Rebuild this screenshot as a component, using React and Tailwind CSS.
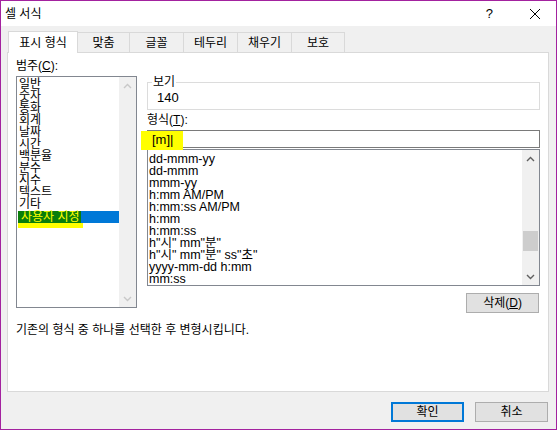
import React from 'react';

const categories = ['일반', '숫자', '통화', '회계', '날짜', '시간', '백분율', '분수', '지수', '텍스트', '기타'];

const formats = [
  'dd-mmm-yy',
  'dd-mmm',
  'mmm-yy',
  'h:mm AM/PM',
  'h:mm:ss AM/PM',
  'h:mm',
  'h:mm:ss',
  'h"시" mm"분"',
  'h"시" mm"분" ss"초"',
  'yyyy-mm-dd h:mm',
  'mm:ss',
];

const tabs = ['맞춤', '글꼴', '테두리', '채우기', '보호'];
const tabWidths = ['w-[52px]', 'w-[54px]', 'w-[54px]', 'w-[54px]', 'w-[53px]'];

const Chevron = ({ down, color }) => (
  <svg width="9" height="6" viewBox="0 0 9 6" className="block">
    <path
      d={down ? 'M1 1 L4.5 4.5 L8 1' : 'M1 5 L4.5 1.5 L8 5'}
      fill="none"
      stroke={color}
      strokeWidth="1.4"
    />
  </svg>
);

const Scrollbar = ({ disabled, thumb }) => (
  <div className="w-[17px] h-full bg-[#f0f0f0] flex flex-col items-center shrink-0">
    <div className="h-[17px] flex items-center justify-center">
      <Chevron color={disabled ? '#c8c8c8' : '#606060'} />
    </div>
    <div className="flex-1 w-full flex flex-col">
      {thumb && (
        <>
          <div className="h-[64px]" />
          <div className="h-[20px] mx-[1px] bg-[#cdcdcd]" />
        </>
      )}
    </div>
    <div className="h-[17px] flex items-center justify-center">
      <Chevron down color={disabled ? '#c8c8c8' : '#606060'} />
    </div>
  </div>
);

const App = () => {
  return (
    <div
      className="w-[557px] h-[430px] border border-[#a3229f] bg-[#f0f0f0] flex flex-col text-[12px] text-black overflow-hidden"
      style={{ fontFamily: '"Liberation Sans", "Noto Sans CJK KR", sans-serif' }}
    >
      {/* title bar */}
      <div className="h-[25px] bg-white flex items-center shrink-0">
        <span className="pl-[4px] text-[12px]">셀 서식</span>
        <div className="flex-1" />
        <span className="text-[13px] mr-[36px]">?</span>
        <svg width="12" height="12" viewBox="0 0 12 12" className="mr-[15px]">
          <path d="M1 1 L11 11 M11 1 L1 11" stroke="#000" strokeWidth="1" />
        </svg>
      </div>

      <div className="px-[6px] pt-[5px] flex flex-col">
        {/* tabs */}
        <div className="flex items-end h-[21px] pl-[1px] relative z-10">
          <div className="w-[70px] h-[22px] mb-[-1px] bg-white border border-b-0 border-[#d9d9d9] flex items-center justify-center">
            표시 형식
          </div>
          {tabs.map((t, i) => (
            <div
              key={t}
              className={`${tabWidths[i]} h-[20px] border border-l-0 border-b-0 border-[#d9d9d9] bg-[#f0f0f0] flex items-center justify-center`}
            >
              {t}
            </div>
          ))}
        </div>

        {/* panel */}
        <div className="w-[542px] h-[340px] bg-white border border-[#d9d9d9] px-[8px] pt-[7px] flex flex-col">
          <div className="flex gap-[10px]">
            {/* category column */}
            <div className="flex flex-col w-[121px]">
              <div className="h-[13px] leading-[13px]">
                범주(<span className="underline">C</span>):
              </div>
              <div className="mt-[3px] h-[232px] border border-[#828790] bg-white flex">
                <div className="flex-1 pt-[1px] pl-[1px] leading-[12px]">
                  {categories.map((c) => (
                    <div key={c} className="h-[12px] pl-[1px]">
                      {c}
                    </div>
                  ))}
                  <div className="h-[12px] bg-[#0078d7] mt-[1px]">
                    <span className="inline-block h-[12px] bg-[#0a7d0a] text-[#ffff00] px-[1px] pl-[3px] leading-[12px]">
                      사용자 지정
                    </span>
                  </div>
                  <div className="h-[5px] w-[65px] bg-[#ffff00]" />
                </div>
                <Scrollbar disabled />
              </div>
            </div>

            {/* format column */}
            <div className="flex flex-col w-[393px] pt-[16px]">
              <div className="relative h-[34px]">
                <div className="mt-[6px] h-[28px] border border-[#dcdcdc] pl-[9px] pt-[9px] leading-[12px] text-[13px]">
                  140
                </div>
                <span className="absolute left-[5px] top-0 bg-white px-[1px] leading-[13px]">보기</span>
              </div>

              <div className="mt-[4px] h-[13px] leading-[13px]">
                형식(<span className="underline">T</span>):
              </div>

              <div className="relative mt-[3px] h-[18px] border border-[#7a7a7a] bg-white">
                <div className="absolute left-[-7px] top-[0px] w-[42px] h-[19px] bg-[#ffff00]" />
                <span className="relative pl-[4px] leading-[16px] text-[13px]">[m]|</span>
              </div>

              <div className="mt-[1px] h-[137px] border border-[#828790] bg-white flex">
                <div className="flex-1 pt-[3px] pl-[1px] leading-[12px] text-[12.5px] overflow-hidden">
                  {formats.map((f) => (
                    <div key={f} className="h-[12px] whitespace-nowrap">
                      {f}
                    </div>
                  ))}
                </div>
                <Scrollbar thumb />
              </div>

              <div className="flex justify-end mt-[7px] pr-[1px]">
                <div className="w-[73px] h-[20px] bg-[#e1e1e1] border border-[#adadad] flex items-center justify-center">
                  삭제(<span className="underline">D</span>)
                </div>
              </div>
            </div>
          </div>

          <div className="mt-[10px] leading-[14px]">기존의 형식 중 하나를 선택한 후 변형시킵니다.</div>
        </div>

        {/* buttons */}
        <div className="flex justify-end gap-[11px] mt-[10px] pr-[2px]">
          <div className="w-[73px] h-[20px] bg-[#e1e1e1] border-2 border-[#0078d7] flex items-center justify-center">
            확인
          </div>
          <div className="w-[73px] h-[20px] bg-[#e1e1e1] border border-[#adadad] flex items-center justify-center">
            취소
          </div>
        </div>
      </div>
    </div>
  );
};

export default App;
